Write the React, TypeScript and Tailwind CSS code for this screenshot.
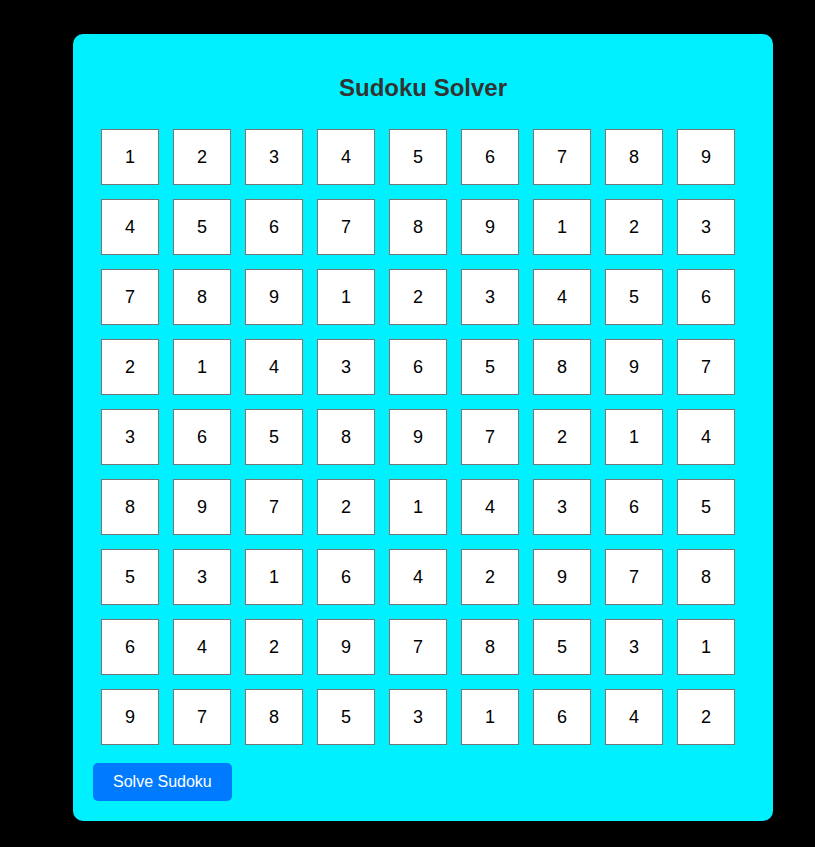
import React from 'react';

const board: number[][] = [
  [1, 2, 3, 4, 5, 6, 7, 8, 9],
  [4, 5, 6, 7, 8, 9, 1, 2, 3],
  [7, 8, 9, 1, 2, 3, 4, 5, 6],
  [2, 1, 4, 3, 6, 5, 8, 9, 7],
  [3, 6, 5, 8, 9, 7, 2, 1, 4],
  [8, 9, 7, 2, 1, 4, 3, 6, 5],
  [5, 3, 1, 6, 4, 2, 9, 7, 8],
  [6, 4, 2, 9, 7, 8, 5, 3, 1],
  [9, 7, 8, 5, 3, 1, 6, 4, 2],
];

const App: React.FC = () => {
  return (
    <div
      className="min-h-screen bg-black pl-[73px] pt-[34px] pb-[26px]"
      style={{ fontFamily: '"Liberation Sans", Arial, sans-serif' }}
    >
      <div className="w-[700px] rounded-[10px] bg-[#00f0ff] px-5 pt-[40px] pb-5">
        <h1 className="text-center text-[24px] leading-[28px] font-bold text-[#333333]">
          Sudoku Solver
        </h1>

        <div className="mt-[27px] ml-2 grid grid-cols-[repeat(9,58px)] gap-x-[14px] gap-y-[14px]">
          {board.map((row, r) =>
            row.map((n, c) => (
              <div
                key={`${r}-${c}`}
                className="flex h-[56px] w-[58px] items-center justify-center border border-[#767676] bg-white text-[18px] text-black"
              >
                {n}
              </div>
            ))
          )}
        </div>

        <button className="mt-[18px] h-[38px] rounded-[5px] bg-[#007bff] px-5 text-[16px] text-white">
          Solve Sudoku
        </button>
      </div>
    </div>
  );
};

export default App;
